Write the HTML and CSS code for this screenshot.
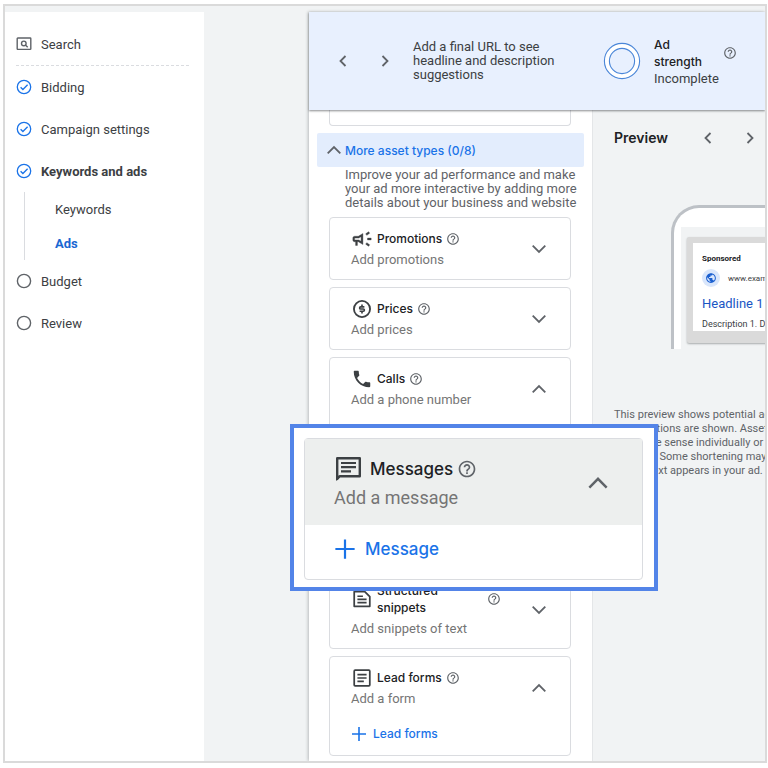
FILE: index.html
```html
<!DOCTYPE html>
<html lang="en">
<head>
    <meta charset="UTF-8">
    <title>Keywords and ads</title>
    <link rel="stylesheet" href="styles.css">
</head>
<body>
    <!-- Shared icons -->
    <svg class="sprite" aria-hidden="true">
        <symbol id="help" viewBox="0 0 24 24">
            <path d="M11 18h2v-2h-2v2zm1-16C6.48 2 2 6.48 2 12s4.48 10 10 10 10-4.48 10-10S17.52 2 12 2zm0 18c-4.41 0-8-3.59-8-8s3.59-8 8-8 8 3.59 8 8-3.59 8-8 8zm0-14c-2.21 0-4 1.79-4 4h2c0-1.1.9-2 2-2s2 .9 2 2c0 2-3 1.75-3 5h2c0-2.25 3-2.5 3-5 0-2.21-1.79-4-4-4z"/>
        </symbol>
        <symbol id="done" viewBox="0 0 16 16">
            <circle cx="8" cy="8" r="6.7" fill="none" stroke="currentColor" stroke-width="1.3"/>
            <path d="M4.6 8.2l2.3 2.3 4.7-4.8" fill="none" stroke="currentColor" stroke-width="1.3"/>
        </symbol>
        <symbol id="todo" viewBox="0 0 16 16">
            <circle cx="8" cy="8" r="6.6" fill="none" stroke="currentColor" stroke-width="1.4"/>
        </symbol>
        <symbol id="up" viewBox="0 0 16 16">
            <path d="M1.7 11.3L8 5l6.3 6.3" fill="none" stroke="currentColor" stroke-width="1.8"/>
        </symbol>
        <symbol id="down" viewBox="0 0 16 16">
            <path d="M1.7 4.7L8 11l6.3-6.3" fill="none" stroke="currentColor" stroke-width="1.8"/>
        </symbol>
        <symbol id="left" viewBox="0 0 16 16">
            <path d="M10.5 3L5.5 8l5 5" fill="none" stroke="currentColor" stroke-width="1.8"/>
        </symbol>
        <symbol id="right" viewBox="0 0 16 16">
            <path d="M5.5 3l5 5-5 5" fill="none" stroke="currentColor" stroke-width="1.8"/>
        </symbol>
        <symbol id="plus" viewBox="0 0 16 16">
            <path d="M8 1v14M1 8h14" fill="none" stroke="currentColor" stroke-width="1.6"/>
        </symbol>
    </svg>

    <div class="frame">
        <nav class="sidebar">
            <a class="step" href="#search">
                <svg class="step-icon" viewBox="0 0 16 16" fill="none" stroke="#5f6368" stroke-width="1.4">
                    <rect x="1.2" y="2" width="13.6" height="11.4" rx="0.6"/>
                    <circle cx="7.8" cy="7.4" r="2.3"/>
                    <path d="M9.4 9l2.3 2.3"/>
                </svg>
                Search
            </a>
            <hr class="divider">
            <a class="step done" href="#bidding"><svg class="step-icon"><use href="#done"/></svg>Bidding</a>
            <a class="step done" href="#settings"><svg class="step-icon"><use href="#done"/></svg>Campaign settings</a>
            <a class="step done current" href="#keywords-ads"><svg class="step-icon"><use href="#done"/></svg>Keywords and ads</a>
            <div class="substeps">
                <a class="substep" href="#keywords">Keywords</a>
                <a class="substep active" href="#ads">Ads</a>
            </div>
            <a class="step" href="#budget"><svg class="step-icon"><use href="#todo"/></svg>Budget</a>
            <a class="step" href="#review"><svg class="step-icon"><use href="#todo"/></svg>Review</a>
        </nav>

        <main class="main">
            <header class="strength">
                <div class="arrows">
                    <button class="icon-btn" aria-label="Previous"><svg class="arrow"><use href="#left"/></svg></button>
                    <button class="icon-btn" aria-label="Next"><svg class="arrow"><use href="#right"/></svg></button>
                </div>
                <p class="tip">Add a final URL to see headline and description suggestions</p>
                <svg class="ring" viewBox="0 0 38 38">
                    <circle cx="19" cy="19" r="17.6" fill="#fff" stroke="#4a86d8" stroke-width="1.1"/>
                    <circle cx="19" cy="19" r="12.6" fill="#e8f0fe" stroke="#4a86d8" stroke-width="1.1"/>
                </svg>
                <div class="score">
                    <strong class="score-title">Ad strength</strong>
                    <span class="score-value">Incomplete</span>
                </div>
                <svg class="help score-help"><use href="#help"/></svg>
            </header>

            <div class="columns">
                <section class="editor">
                    <div class="card card-cut"></div>
                    <button class="more"><svg class="chevron"><use href="#up"/></svg>More asset types (0/8)</button>
                    <p class="intro">Improve your ad performance and make your ad more interactive by adding more details about your business and website</p>

                    <div class="cards">
                        <div class="card">
                            <div class="card-head">
                                <div class="card-text">
                                    <h3 class="card-title">
                                        <svg class="type-icon" viewBox="0 0 24 24"><path d="M18 11v2h4v-2h-4zm-2 6.61c.96.71 2.21 1.65 3.2 2.39.4-.53.8-1.07 1.2-1.6-.99-.74-2.24-1.68-3.2-2.4-.4.54-.8 1.08-1.2 1.61zM20.4 5.6c-.4-.53-.8-1.07-1.2-1.6-.99.74-2.24 1.68-3.2 2.4.4.53.8 1.07 1.2 1.6.96-.72 2.21-1.65 3.2-2.4zM4 9c-1.1 0-2 .9-2 2v2c0 1.1.9 2 2 2h1v4h2v-4h1l5 3V6L8 9H4zm5.03 1.71L11 9.53v4.94l-1.97-1.18-.48-.29H4v-2h4.55l.48-.29z" stroke="#3c4043" stroke-width=".4"/></svg>
                                        <span>Promotions</span>
                                        <svg class="help"><use href="#help"/></svg>
                                    </h3>
                                    <p class="card-sub">Add promotions</p>
                                </div>
                                <button class="icon-btn" aria-label="Expand promotions"><svg class="chevron"><use href="#down"/></svg></button>
                            </div>
                        </div>

                        <div class="card">
                            <div class="card-head">
                                <div class="card-text">
                                    <h3 class="card-title">
                                        <svg class="type-icon" viewBox="0 0 24 24" fill="none" stroke="#3c4043" stroke-width="2">
                                            <circle cx="12" cy="12" r="8.8"/>
                                            <path d="M14.6 9.6h-4a1.2 1.2 0 0 0 0 2.4h2.8a1.2 1.2 0 0 1 0 2.4H9.4M12 7.2v2.4M12 14.4v2.4" stroke-width="1.8"/>
                                        </svg>
                                        <span>Prices</span>
                                        <svg class="help"><use href="#help"/></svg>
                                    </h3>
                                    <p class="card-sub">Add prices</p>
                                </div>
                                <button class="icon-btn" aria-label="Expand prices"><svg class="chevron"><use href="#down"/></svg></button>
                            </div>
                        </div>

                        <div class="card card-open">
                            <div class="card-head">
                                <div class="card-text">
                                    <h3 class="card-title">
                                        <svg class="type-icon" viewBox="0 0 24 24"><path d="M6.62 10.79c1.44 2.83 3.76 5.14 6.59 6.59l2.2-2.2c.27-.27.67-.36 1.02-.24 1.12.37 2.33.57 3.57.57.55 0 1 .45 1 1V20c0 .55-.45 1-1 1-9.39 0-17-7.61-17-17 0-.55.45-1 1-1h3.5c.55 0 1 .45 1 1 0 1.25.2 2.45.57 3.57.11.35.03.74-.25 1.02l-2.2 2.2z"/></svg>
                                        <span>Calls</span>
                                        <svg class="help"><use href="#help"/></svg>
                                    </h3>
                                    <p class="card-sub">Add a phone number</p>
                                </div>
                                <button class="icon-btn" aria-label="Collapse calls"><svg class="chevron"><use href="#up"/></svg></button>
                            </div>
                        </div>

                        <!-- Messages card, enlarged over its place in the list -->
                        <div class="slot">
                            <div class="callout">
                                <div class="card card-large">
                                    <div class="card-head">
                                        <div class="card-text">
                                            <h3 class="card-title">
                                                <svg class="type-icon" viewBox="0 0 28 28" fill="none" stroke="#3c4043" stroke-width="2.4">
                                                    <path d="M3.2 24V3.2h22.6v18H5.6z" stroke-linejoin="round"/>
                                                    <path d="M2 26l5-5H2z" fill="#3c4043" stroke="none"/>
                                                    <path d="M7 8h15M7 12.2h15M7 16.4h10" stroke-width="2.2"/>
                                                </svg>
                                                <span>Messages</span>
                                                <svg class="help"><use href="#help"/></svg>
                                            </h3>
                                            <p class="card-sub">Add a message</p>
                                        </div>
                                        <button class="icon-btn" aria-label="Collapse messages"><svg class="chevron"><use href="#up"/></svg></button>
                                    </div>
                                    <button class="add"><svg class="plus"><use href="#plus"/></svg>Message</button>
                                </div>
                            </div>
                        </div>

                        <div class="card">
                            <div class="card-head">
                                <div class="card-text">
                                    <h3 class="card-title">
                                        <svg class="type-icon" viewBox="0 0 24 24" fill="none" stroke="#3c4043" stroke-width="1.9">
                                            <path d="M3.5 4H15l5.500 5.500V20h-17z" stroke-linejoin="round"/>
                                            <path d="M7 9h6M7 12.5h10M7 16h10"/>
                                        </svg>
                                        <span class="wrap">Structured snippets</span>
                                        <svg class="help"><use href="#help"/></svg>
                                    </h3>
                                    <p class="card-sub">Add snippets of text</p>
                                </div>
                                <button class="icon-btn" aria-label="Expand structured snippets"><svg class="chevron"><use href="#down"/></svg></button>
                            </div>
                        </div>

                        <div class="card">
                            <div class="card-head">
                                <div class="card-text">
                                    <h3 class="card-title">
                                        <svg class="type-icon" viewBox="0 0 24 24" fill="none" stroke="#3c4043" stroke-width="1.9">
                                            <rect x="3.5" y="3.5" width="17" height="17" rx="1"/>
                                            <path d="M7 8.3h10M7 12h10M7 15.7h7"/>
                                        </svg>
                                        <span>Lead forms</span>
                                        <svg class="help"><use href="#help"/></svg>
                                    </h3>
                                    <p class="card-sub">Add a form</p>
                                </div>
                                <button class="icon-btn" aria-label="Collapse lead forms"><svg class="chevron"><use href="#up"/></svg></button>
                            </div>
                            <button class="add"><svg class="plus"><use href="#plus"/></svg>Lead forms</button>
                        </div>
                    </div>
                </section>

                <section class="preview">
                    <div class="preview-head">
                        <h2 class="preview-title">Preview</h2>
                        <button class="icon-btn" aria-label="Previous preview"><svg class="arrow"><use href="#left"/></svg></button>
                        <button class="icon-btn" aria-label="Next preview"><svg class="arrow"><use href="#right"/></svg></button>
                    </div>
                    <div class="phone">
                        <div class="screen">
                            <div class="ad-frame">
                                <div class="ad">
                                    <strong class="ad-label">Sponsored</strong>
                                    <div class="ad-url">
                                        <svg class="globe" viewBox="0 0 24 24">
                                            <circle cx="12" cy="12" r="12" fill="#d9e6fb"/>
                                            <path transform="translate(4.2 4.2) scale(.65)" fill="#1a5fd0" d="M12 2C6.48 2 2 6.48 2 12s4.48 10 10 10 10-4.48 10-10S17.52 2 12 2zm-1 17.93c-3.95-.49-7-3.85-7-7.93 0-.62.08-1.21.21-1.79L9 15v1c0 1.1.9 2 2 2v1.93zm6.9-2.54c-.26-.81-1-1.39-1.9-1.39h-1v-3c0-.55-.45-1-1-1H8v-2h2c.55 0 1-.45 1-1V7h2c1.1 0 2-.9 2-2v-.41c2.93 1.19 5 4.06 5 7.41 0 2.08-.8 3.97-2.1 5.39z"/>
                                        </svg>
                                        <span>www.example.com</span>
                                    </div>
                                    <a class="ad-headline" href="#ad">Headline 1 | Headline 2</a>
                                    <p class="ad-desc">Description 1. Description 2.</p>
                                </div>
                            </div>
                        </div>
                    </div>
                    <p class="note">
                        This preview shows potential ads<br>
                        combinations are shown. Assets<br>
                        can make sense individually or in<br>
                        ad order. Some shortening may<br>
                        for the text appears in your ad.
                    </p>
                </section>
            </div>
        </main>
    </div>
</body>
</html>
```
FILE: styles.css
```css
* {
    box-sizing: border-box;
}

body {
    margin: 4px 1px 5px 3px;
    background: #fff;
    color: #3c4043;
    font-family: Roboto, "Liberation Sans", sans-serif;
    font-size: 13px;
}

h2, h3, p {
    margin: 0;
}

a {
    color: inherit;
    text-decoration: none;
}

button {
    padding: 0;
    border: none;
    background: none;
    color: inherit;
    font: inherit;
    cursor: pointer;
}

svg {
    display: block;
    flex: none;
}

.sprite {
    position: absolute;
    width: 0;
    height: 0;
}

.frame {
    display: flex;
    min-height: calc(100vh - 9px);
    padding-top: 6px;
    border: 2px solid #dadada;
    background: #f1f3f4;
    overflow: hidden;
}

/* Sidebar */
.sidebar {
    flex: 0 0 199px;
    margin-right: 105px;
    padding: 11px 15px 0 11px;
    background: #fff;
}

.step {
    display: flex;
    align-items: center;
    gap: 9px;
    height: 42px;
}

.step-icon {
    width: 16px;
    height: 16px;
    color: #5f6368;
}

.done .step-icon {
    color: #1a73e8;
}

.current {
    font-weight: bold;
}

.divider {
    margin: 0;
    border: none;
    border-top: 1px dashed #dadce0;
}

.substeps {
    margin-left: 8px;
    border-left: 1px solid #dadce0;
}

.substep {
    display: flex;
    align-items: center;
    height: 34px;
    padding-left: 30px;
}

.active {
    color: #1967d2;
    font-weight: bold;
}

/* Ad strength bar */
.main {
    display: flex;
    flex: 1;
    flex-direction: column;
    min-width: 0;
    background: #fff;
    box-shadow: -1px 0 3px rgba(60, 64, 67, 0.3);
}

.strength {
    position: relative;
    display: flex;
    align-items: center;
    height: 98px;
    padding: 0 28px 0 26px;
    background: #e8f0fe;
    box-shadow: 0 1px 2px rgba(60, 64, 67, 0.6);
}

.arrows {
    display: flex;
    gap: 26px;
    margin-right: 20px;
}

.arrow {
    width: 16px;
    height: 16px;
    color: #5f6368;
}

.tip {
    width: 150px;
    margin-right: auto;
    line-height: 14px;
}

.ring {
    width: 38px;
    height: 38px;
    margin-right: 13px;
}

.score {
    width: 63px;
    margin-right: 6px;
    line-height: 17px;
}

.score-title {
    display: block;
    color: #202124;
    font-family: Inter, sans-serif;
    font-size: 12px;
    font-weight: 500;
}

.help {
    width: 14px;
    height: 14px;
    fill: #5f6368;
}

.score-help {
    align-self: flex-start;
    margin-top: 34px;
}

/* Editor */
.columns {
    display: flex;
    flex: 1;
}

.editor {
    flex: 0 0 283px;
    padding-bottom: 4px;
}

.card {
    border: 1px solid #dadce0;
    border-radius: 4px;
    background: #fff;
}

.card-cut {
    height: 16px;
    margin: 0 21px 7px 20px;
    border-top: none;
    border-radius: 0 0 4px 4px;
}

.more {
    display: flex;
    align-items: center;
    gap: 3px;
    width: calc(100% - 16px);
    height: 34px;
    margin-left: 8px;
    padding-left: 9px;
    border-radius: 2px;
    background: #e3edfd;
    color: #1a73e8;
    font-family: Inter, sans-serif;
    font-size: 12px;
    font-weight: 500;
}

.chevron {
    width: 16px;
    height: 16px;
    color: #5f6368;
}

.intro {
    padding: 1px 10px 7px 36px;
    color: #5f6368;
    line-height: 14px;
}

.cards {
    display: flex;
    flex-direction: column;
    gap: 7px;
    padding: 0 21px 0 20px;
}

.card-open {
    min-height: 100px;
}

.card-head {
    display: flex;
    align-items: center;
    padding: 12px 23px 11px 21px;
}

.card-text {
    flex: 1;
}

.card-title {
    display: flex;
    align-items: center;
    gap: 4px;
    color: #202124;
    font-family: Inter, sans-serif;
    font-size: 12px;
    font-weight: 500;
    line-height: 17px;
}

.type-icon {
    width: 22px;
    height: 22px;
    margin: -3px 0;
    fill: #3c4043;
}

.type-icon[fill="none"] {
    fill: none;
}

.wrap {
    width: 106px;
}

.card-sub {
    margin-top: 4px;
    color: #757575;
    line-height: 17px;
}

.add {
    display: flex;
    align-items: center;
    gap: 6px;
    margin: 7px 0 13px 21px;
    color: #1a73e8;
    font-family: Inter, sans-serif;
    font-size: 12px;
    font-weight: 500;
    line-height: 17px;
}

.plus {
    width: 16px;
    height: 16px;
}

/* Enlarged card */
.slot {
    position: relative;
    height: 98px;
}

.callout {
    position: absolute;
    z-index: 1;
    top: -40px;
    left: -39px;
    right: -87px;
    padding: 10px 11px 7px 10px;
    border: 4px solid #5384e8;
    background: #fff;
}

.card-large .card-head {
    padding: 16px 33px 15px 29px;
    background: #edefee;
}

.card-large .card-title {
    gap: 8px;
    font-size: 17px;
    line-height: 28px;
}

.card-large .type-icon {
    width: 28px;
    height: 28px;
    margin: 0;
}

.card-large .help {
    width: 20px;
    height: 20px;
    margin-left: -4px;
}

.card-large .card-sub {
    margin-top: 2px;
    font-size: 18px;
    line-height: 25px;
}

.card-large .chevron {
    width: 22px;
    height: 22px;
}

.card-large .add {
    gap: 9px;
    margin: 12px 0 18px 29px;
    font-size: 17px;
    line-height: 24px;
}

.card-large .plus {
    width: 22px;
    height: 22px;
}

/* Preview */
.preview {
    flex: 1;
    min-width: 0;
    padding: 18px 0 0 21px;
    border-left: 1px solid #e4e6e8;
    background: #f1f3f4;
    overflow: hidden;
}

.preview-head {
    display: flex;
    align-items: center;
    gap: 26px;
    padding-right: 7px;
}

.preview-title {
    margin-right: auto;
    color: #202124;
    font-family: Inter, sans-serif;
    font-size: 14px;
    font-weight: 600;
    line-height: 20px;
}

.phone {
    width: 260px;
    margin: 57px 0 0 57px;
    padding: 19px 7px 0;
    border: 3px solid #bdc1c6;
    border-bottom: none;
    border-radius: 28px 28px 0 0;
    background: #fff;
}

.screen {
    padding: 10px 6px 6px;
    background: #f1f3f4;
}

.ad-frame {
    padding: 6px 6px 12px;
    border-radius: 2px;
    background: #dadada;
    box-shadow: 0 1px 2px rgba(60, 64, 67, 0.4);
}

.ad {
    padding: 10px 9px 0;
    background: #fff;
    white-space: nowrap;
}

.ad-label {
    display: block;
    color: #202124;
    font-size: 8px;
    line-height: 11px;
}

.ad-url {
    display: flex;
    align-items: center;
    gap: 8px;
    margin-top: 5px;
    font-size: 8px;
}

.globe {
    width: 18px;
    height: 18px;
}

.ad-headline {
    display: block;
    margin-top: 7px;
    color: #1a56c4;
    font-size: 13px;
    line-height: 20px;
}

.ad-desc {
    margin-top: 3px;
    font-size: 9px;
    line-height: 14px;
}

.note {
    margin-top: 59px;
    color: #5f6368;
    font-size: 11px;
    line-height: 14px;
    white-space: nowrap;
}
```
